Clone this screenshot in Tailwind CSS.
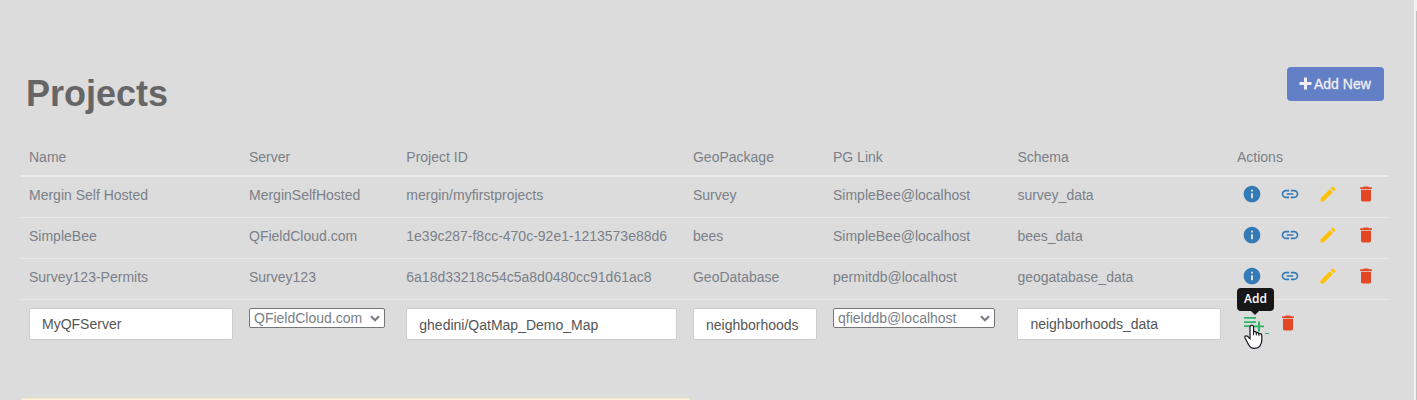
<!DOCTYPE html>
<html lang="en">
<head>
<meta charset="utf-8">
<title>Projects</title>
<script src="https://cdn.jsdelivr.net/npm/@tailwindcss/browser@4"></script>
</head>
<body class="h-[400px] overflow-hidden bg-[#dcdcdc] font-['Liberation_Sans',Arial,sans-serif] text-sm/5 text-[#7b8088]">
<svg class="hidden">
  <symbol id="info" viewBox="0 0 24 24"><path d="M12 2C6.480 2 2 6.480 2 12s4.480 10 10 10 10-4.480 10-10S17.520 2 12 2zm1.200 15h-2.400v-6h2.400v6zm0-8h-2.400V6.800h2.400v2.200z"/></symbol>
  <symbol id="link" viewBox="0 0 24 24"><path d="M3.900 12c0-1.710 1.390-3.100 3.100-3.100h4V7H7c-2.760 0-5 2.240-5 5s2.240 5 5 5h4v-1.900H7c-1.710 0-3.100-1.390-3.100-3.100zM8 13h8v-2H8v2zm9-6h-4v1.900h4c1.710 0 3.100 1.390 3.100 3.100s-1.390 3.100-3.100 3.100h-4V17h4c2.760 0 5-2.240 5-5s-2.240-5-5-5z"/></symbol>
  <symbol id="edit" viewBox="0 0 24 24"><path d="M3 17.250V21h3.750L17.810 9.940l-3.750-3.750L3 17.250zM20.710 7.040c.39-.39.39-1.020 0-1.410l-2.340-2.340c-.39-.39-1.020-.39-1.410 0l-1.830 1.830 3.750 3.750 1.830-1.830z"/></symbol>
  <symbol id="trash" viewBox="0 0 24 24"><path d="M6 19c0 1.100.9 2 2 2h8c1.100 0 2-.9 2-2V7H6v12zM19 4h-3.500l-1-1h-5l-1 1H5v2h14V4z"/></symbol>
  <symbol id="playlist-add" viewBox="0 0 24 24"><path d="M2 6h12v1.800H2zM2 10.200h12v1.800H2zM2 14.200h8v1.800H2zM16 10.500h2v4h4v1.800h-4v4.200h-2v-4.200h-4v-1.800h4z"/></symbol>
  <symbol id="chevron" viewBox="0 0 10 7"><path d="M1 1.200l4 4 4-4" fill="none" stroke="#7b8088" stroke-width="2.200"/></symbol>
</svg>
<div class="flex h-full">
  <main class="flex h-full w-[1414px] flex-col pr-[25px] pl-[21px]">
    <header class="flex h-[138px] shrink-0 items-start justify-between pt-[67px] pr-[5px] pl-[5px]">
      <h1 class="pt-[7px] text-[36px]/[40px] font-bold text-[#666]">Projects</h1>
      <button class="flex h-[34px] w-[97px] items-center gap-[2px] rounded-[4px] bg-[#6380c6] pl-3 text-[#f0f0f4]">
        <svg class="-mt-px size-[13px]" viewBox="0 0 13 13" fill="currentColor"><path d="M5 .5h3v4.500h4.500v3H8v4.500H5V8H.500V5H5z"/></svg>
        <span class="[-webkit-text-stroke:0.3px_#f0f0f4]">Add New</span>
      </button>
    </header>

    <section class="shrink-0">
      <div class="grid h-[39px] grid-cols-[220px_157.300px_286.700px_140px_184.400px_219.600px_160px] border-b-2 border-[#e8ecf0] pt-[9px] *:pl-2">
        <div>Name</div><div>Server</div><div>Project ID</div><div>GeoPackage</div><div>PG Link</div><div>Schema</div><div>Actions</div>
      </div>
      <div class="grid h-[41px] grid-cols-[220px_157.300px_286.700px_140px_184.400px_219.600px_160px] border-b border-[#e8e8ea] pt-2">
        <div class="pl-2">Mergin Self Hosted</div><div class="pl-2">MerginSelfHosted</div><div class="pl-2">mergin/myfirstprojects</div><div class="pl-2">Survey</div><div class="pl-2">SimpleBee@localhost</div><div class="pl-2">survey_data</div>
        <div class="-mt-px flex gap-[18px] pl-[13px] *:size-5"><svg class="fill-[#337ab7]"><use href="#info"/></svg><svg class="fill-[#337ab7]"><use href="#link"/></svg><svg class="fill-[#ffc107]"><use href="#edit"/></svg><svg class="fill-[#e34724]"><use href="#trash"/></svg></div>
      </div>
      <div class="grid h-[41px] grid-cols-[220px_157.300px_286.700px_140px_184.400px_219.600px_160px] border-b border-[#e8e8ea] pt-2">
        <div class="pl-2">SimpleBee</div><div class="pl-2">QFieldCloud.com</div><div class="pl-2">1e39c287-f8cc-470c-92e1-1213573e88d6</div><div class="pl-2">bees</div><div class="pl-2">SimpleBee@localhost</div><div class="pl-2">bees_data</div>
        <div class="-mt-px flex gap-[18px] pl-[13px] *:size-5"><svg class="fill-[#337ab7]"><use href="#info"/></svg><svg class="fill-[#337ab7]"><use href="#link"/></svg><svg class="fill-[#ffc107]"><use href="#edit"/></svg><svg class="fill-[#e34724]"><use href="#trash"/></svg></div>
      </div>
      <div class="grid h-[41px] grid-cols-[220px_157.300px_286.700px_140px_184.400px_219.600px_160px] border-b border-[#e8e8ea] pt-2">
        <div class="pl-2">Survey123-Permits</div><div class="pl-2">Survey123</div><div class="pl-2">6a18d33218c54c5a8d0480cc91d61ac8</div><div class="pl-2">GeoDatabase</div><div class="pl-2">permitdb@localhost</div><div class="pl-2">geogatabase_data</div>
        <div class="-mt-px flex gap-[18px] pl-[13px] *:size-5"><svg class="fill-[#337ab7]"><use href="#info"/></svg><svg class="fill-[#337ab7]"><use href="#link"/></svg><svg class="fill-[#ffc107]"><use href="#edit"/></svg><svg class="fill-[#e34724]"><use href="#trash"/></svg></div>
      </div>
      <div class="grid h-[98px] grid-cols-[220px_157.300px_286.700px_140px_184.400px_219.600px_160px] items-start pt-2 text-[#555]">
        <div class="px-2"><div class="h-8 rounded-[2px] border border-[#ccc] bg-white pt-[5px] pl-3">MyQFServer</div></div>
        <div class="px-2"><div class="flex h-5 w-[136px] items-center justify-between rounded-[2px] border border-[#767676] bg-white pr-[4px] pl-1 text-[#7b8088]">QFieldCloud.com<svg class="h-[7px] w-[10px]"><use href="#chevron"/></svg></div></div>
        <div class="px-2"><div class="h-8 rounded-[2px] border border-[#ccc] bg-white pt-[6px] pl-3">ghedini/QatMap_Demo_Map</div></div>
        <div class="px-2"><div class="h-8 rounded-[2px] border border-[#ccc] bg-white pt-[6px] pl-3">neighborhoods</div></div>
        <div class="px-2"><div class="flex h-5 w-[162px] items-center justify-between rounded-[2px] border border-[#767676] bg-white pr-[4px] pl-1 text-[#7b8088]">qfielddb@localhost<svg class="h-[7px] w-[10px]"><use href="#chevron"/></svg></div></div>
        <div class="px-2"><div class="h-8 rounded-[2px] border border-[#ccc] bg-white pt-[5px] pl-3">neighborhoods_data</div></div>
        <div class="relative flex gap-3 pt-[2.500px] pl-[13px]">
          <svg class="size-6 fill-[#28b765]"><use href="#playlist-add"/></svg>
          <svg class="mt-[2px] size-5 fill-[#e34724]"><use href="#trash"/></svg>
          <div class="absolute -top-5 left-2 flex h-[23px] w-[37px] items-center justify-center rounded-[4px] bg-[#171717] pb-px font-['Open_Sans',sans-serif] text-xs font-semibold text-white">Add</div>
          <svg class="absolute top-[3px] left-[22px] h-1 w-2 fill-[#171717]" viewBox="0 0 8 4"><path d="M0 0h8L4 4z"/></svg>
          <div class="absolute top-[25px] left-9 h-px w-1 bg-[#28b765]"></div>
          <svg class="absolute top-[16px] left-[15px] h-[25px] w-[19px]" viewBox="0 0 19 25"><path d="M7.800 1.200c1.200 0 1.800.8 1.800 1.900v4.800c1-.6 2.400-.2 2.700.8 1-.4 2.200 0 2.600 1 1.500-.5 2.900.3 2.900 2v4.200c0 3-.8 4.500-2 6.200-1 1.500-3 2.200-5.300 2.200-3.300 0-4.800-1.500-6-3.900L1.100 14c-.8-1.600.8-2.900 2.300-1.700L6 14.600V3.100c0-1.100.6-1.900 1.800-1.900z" fill="#fff" stroke="#15151f" stroke-width="1.200"/><path d="M9.600 8v3.200m2.700-2.500v2.700m2.600-1.700v2.200" fill="none" stroke="#15151f"/></svg>
        </div>
      </div>
    </section>
    <div class="w-[669px] flex-1 rounded-t-[4px] border border-b-0 border-[#fbe6c3] bg-[#fdf3df]"></div>
  </main>
  <aside class="flex w-[3px] flex-col bg-[#f1f1f1] pt-[11px] pl-[2px]"><div class="flex-1 bg-[#c1c1c1]"></div></aside>
</div>
</body>
</html>
